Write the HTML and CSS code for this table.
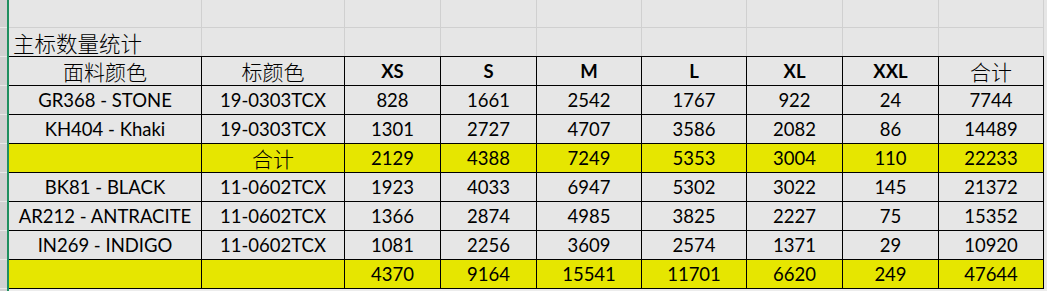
FILE: index.html
```html
<!DOCTYPE html>
<html lang="zh">
<head>
<meta charset="utf-8">
<title>主标数量统计</title>
<link rel="stylesheet" href="styles.css">
</head>
<body>
<div class="sheet">
  <div class="rowhdr">
    <div class="rh r0"></div>
    <div class="rh"></div>
    <div class="rh"></div>
    <div class="rh"></div>
    <div class="rh"></div>
    <div class="rh"></div>
    <div class="rh"></div>
    <div class="rh"></div>
    <div class="rh"></div>
    <div class="rh"></div>
  </div>
  <div class="sel"></div>
  <div class="main">
    <div class="top">
      <div class="tc"></div><div class="tc"></div><div class="tc"></div><div class="tc"></div><div class="tc"></div><div class="tc"></div><div class="tc"></div><div class="tc"></div><div class="tc"></div>
      <div class="tc title"><span class="zh">主标数量统计</span></div><div class="tc"></div><div class="tc"></div><div class="tc"></div><div class="tc"></div><div class="tc"></div><div class="tc"></div><div class="tc"></div><div class="tc"></div>
    </div>
    <div class="grid">
      <div class="c"><span class="zh">面料颜色</span></div>
      <div class="c"><span class="zh">标颜色</span></div>
      <div class="c h">XS</div>
      <div class="c h">S</div>
      <div class="c h">M</div>
      <div class="c h">L</div>
      <div class="c h">XL</div>
      <div class="c h">XXL</div>
      <div class="c"><span class="zh">合计</span></div>

      <div class="c">GR368 - STONE</div>
      <div class="c">19-0303TCX</div>
      <div class="c">828</div>
      <div class="c">1661</div>
      <div class="c">2542</div>
      <div class="c">1767</div>
      <div class="c">922</div>
      <div class="c">24</div>
      <div class="c">7744</div>

      <div class="c">KH404 - Khaki</div>
      <div class="c">19-0303TCX</div>
      <div class="c">1301</div>
      <div class="c">2727</div>
      <div class="c">4707</div>
      <div class="c">3586</div>
      <div class="c">2082</div>
      <div class="c">86</div>
      <div class="c">14489</div>

      <div class="c y"></div>
      <div class="c y"><span class="zh">合计</span></div>
      <div class="c y">2129</div>
      <div class="c y">4388</div>
      <div class="c y">7249</div>
      <div class="c y">5353</div>
      <div class="c y">3004</div>
      <div class="c y">110</div>
      <div class="c y">22233</div>

      <div class="c">BK81 - BLACK</div>
      <div class="c">11-0602TCX</div>
      <div class="c">1923</div>
      <div class="c">4033</div>
      <div class="c">6947</div>
      <div class="c">5302</div>
      <div class="c">3022</div>
      <div class="c">145</div>
      <div class="c">21372</div>

      <div class="c">AR212 - ANTRACITE</div>
      <div class="c">11-0602TCX</div>
      <div class="c">1366</div>
      <div class="c">2874</div>
      <div class="c">4985</div>
      <div class="c">3825</div>
      <div class="c">2227</div>
      <div class="c">75</div>
      <div class="c">15352</div>

      <div class="c">IN269 - INDIGO</div>
      <div class="c">11-0602TCX</div>
      <div class="c">1081</div>
      <div class="c">2256</div>
      <div class="c">3609</div>
      <div class="c">2574</div>
      <div class="c">1371</div>
      <div class="c">29</div>
      <div class="c">10920</div>

      <div class="c y"></div>
      <div class="c y"></div>
      <div class="c y">4370</div>
      <div class="c y">9164</div>
      <div class="c y">15541</div>
      <div class="c y">11701</div>
      <div class="c y">6620</div>
      <div class="c y">249</div>
      <div class="c y">47644</div>
    </div>
    <div class="bottom"></div>
  </div>
</div>
</body>
</html>
```

FILE: styles.css
```css
html, body {
  margin: 0;
  padding: 0;
}
body {
  width: 1047px;
  height: 291px;
  overflow: hidden;
  background: #e6e6e6;
  font-family: Lato, "Noto Sans CJK SC", sans-serif;
  font-size: 18.5px;
  color: #000;
}
.sheet {
  display: grid;
  grid-template-columns: 7px 2px 1fr;
  height: 291px;
}
.rowhdr {
  display: flex;
  flex-direction: column;
  background: #d2d2d2;
}
.rh {
  height: 28px;
  flex: none;
  border-bottom: 1px solid #e9e9e9;
}
.rh.r0 {
  height: 27px;
}
.sel {
  background: #1f8f5f;
}
.main {
  display: flex;
  flex-direction: column;
}
.top {
  display: grid;
  grid-template-columns: 192px 142px 95px 95px 104px 104px 95px 95px 104px;
  grid-template-rows: 27px 28px;
  gap: 1px;
  background: #d0d0d0;
  border-right: 1px solid #d0d0d0;
  width: max-content;
}
.tc {
  background: #e6e6e6;
}
.title {
  display: flex;
  align-items: flex-end;
  padding-left: 4px;
  line-height: 26px;
}
.title .zh {
  font-size: 21.5px;
}
.grid {
  display: grid;
  grid-template-columns: 192px 142px 95px 95px 104px 104px 95px 95px 104px;
  grid-auto-rows: 28px;
  gap: 1px;
  background: #000;
  border: 1px solid #000;
  border-left: 0;
  width: max-content;
}
.c {
  background: #e6e6e6;
  text-align: center;
  line-height: 28px;
  white-space: nowrap;
  overflow: hidden;
}
.c.h {
  font-weight: bold;
  padding-top: 1px;
  line-height: 27px;
}
.c.y {
  background: #e6e600;
}
.zh {
  font-family: "Noto Sans CJK SC", sans-serif;
  font-size: 21px;
  font-weight: 300;
  vertical-align: -2px;
}
.bottom {
  flex: 1;
  background: #ececec;
}
```
